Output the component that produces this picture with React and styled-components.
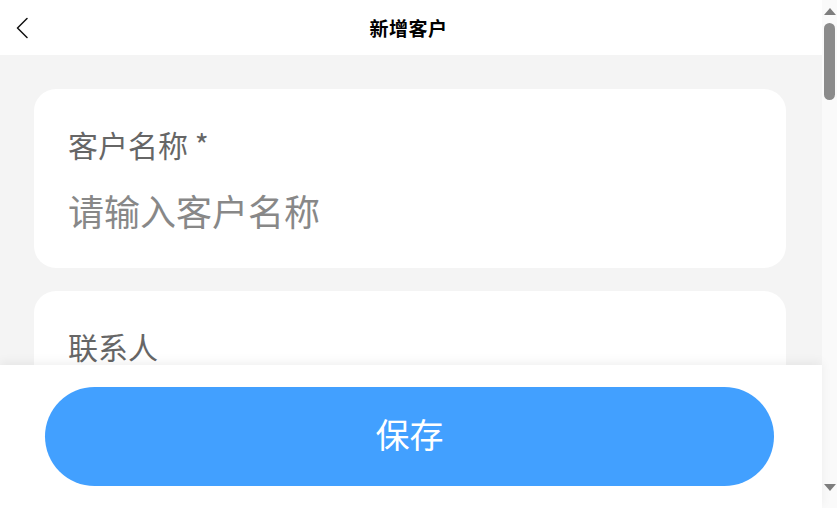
import React from "react";
import styled, { createGlobalStyle } from "styled-components";

const Global = createGlobalStyle`
  html, body { margin: 0; padding: 0; background: #f4f4f4; overflow: hidden; }
  body { font-family: "Noto Sans CJK SC", "Noto Sans", sans-serif; }
  * { box-sizing: border-box; }
`;

const Shell = styled.div`
  display: flex;
  height: 100vh;
`;

const Viewport = styled.div`
  position: relative;
  flex: 1;
  min-width: 0;
`;

const Scroller = styled.div`
  height: 100%;
  overflow-y: auto;
  scrollbar-width: none;
  background: #f4f4f4;
  &::-webkit-scrollbar { display: none; }
`;

const ScrollTrack = styled.div`
  width: 15px;
  flex: none;
  background: #fafafa;
  display: flex;
  flex-direction: column;
  align-items: center;
  padding: 8px 0 17px;
`;

const Arrow = styled.svg`
  display: block;
  flex: none;
`;

const Thumb = styled.div`
  width: 11px;
  height: 77px;
  margin-top: 8px;
  border-radius: 6px;
  background: #8b8b8b;
`;

const TrackRest = styled.div`
  flex: 1;
`;

const Content = styled.div`
  padding-bottom: 193px;
`;

const Header = styled.header`
  height: 55px;
  background: #fff;
  display: grid;
  grid-template-columns: 55px 1fr 60px;
  align-items: center;
`;

const Back = styled.button`
  border: 0;
  background: none;
  padding: 0 0 0 16px;
  height: 55px;
  display: flex;
  align-items: center;
  cursor: pointer;
`;

const Title = styled.h1`
  margin: 0;
  text-align: center;
  font-size: 19px;
  line-height: 55px;
  font-weight: 700;
  color: #000;
  letter-spacing: 0.5px;
`;

const Form = styled.main`
  padding: 34px 36px 0 34px;
  display: flex;
  flex-direction: column;
  gap: 23px;
`;

const Card = styled.section`
  background: #fff;
  border-radius: 22px;
  padding: 34px 34px 33px;
  display: flex;
  flex-direction: column;
  gap: 20px;
`;

const Label = styled.label`
  font-size: 30px;
  line-height: 42px;
  color: #666;
`;

const Input = styled.input`
  border: 0;
  outline: none;
  padding: 0;
  height: 50px;
  font-family: inherit;
  font-size: 36px;
  color: #333;
  background: transparent;
  &::placeholder { color: #888; }
`;

const Footer = styled.footer`
  position: absolute;
  left: 0;
  right: 0;
  bottom: 0;
  height: 143px;
  background: #fff;
  padding: 22px 48px 22px 45px;
  box-shadow: 0 -3px 10px rgba(0, 0, 0, 0.06);
  display: flex;
`;

const SaveButton = styled.button`
  flex: 1;
  border: 0;
  border-radius: 50px;
  background: #42a0ff;
  color: #fff;
  font-family: inherit;
  font-size: 34px;
  padding: 0 0 6px;
  cursor: pointer;
`;

const fields = [
  ["客户名称 *", "请输入客户名称"],
  ["联系人", "请输入联系人"],
  ["联系电话", "请输入联系电话"],
  ["手机号码", "请输入手机号码"],
  ["电子邮箱", "请输入电子邮箱"],
  ["公司地址", "请输入公司地址"],
  ["所属行业", "请输入所属行业"],
  ["客户来源", "请输入客户来源"],
  ["客户等级", "请输入客户等级"],
  ["开户银行", "请输入开户银行"],
  ["银行账号", "请输入银行账号"],
  ["税号", "请输入税号"],
  ["备注", "请输入备注"],
];

export default function App() {
  return (
    <>
      <Global />
      <Shell>
        <Viewport>
          <Scroller>
            <Content>
              <Header>
                <Back aria-label="返回">
                  <svg width="12" height="22" viewBox="0 0 12 22" fill="none">
                    <path d="M11 1.5 L1.5 11 L11 20.5" stroke="#111" strokeWidth="1.5" strokeLinecap="round" strokeLinejoin="round" />
                  </svg>
                </Back>
                <Title>新增客户</Title>
                <span />
              </Header>
              <Form>
                {fields.map(([label, ph]) => (
                  <Card key={label}>
                    <Label>{label}</Label>
                    <Input placeholder={ph} />
                  </Card>
                ))}
              </Form>
            </Content>
          </Scroller>
          <Footer>
            <SaveButton>保存</SaveButton>
          </Footer>
        </Viewport>
        <ScrollTrack aria-hidden="true">
          <Arrow width="12" height="7" viewBox="0 0 12 7">
            <path d="M6 0 L12 7 L0 7 Z" fill="#7e7e7e" />
          </Arrow>
          <Thumb />
          <TrackRest />
          <Arrow width="12" height="7" viewBox="0 0 12 7">
            <path d="M0 0 L12 0 L6 7 Z" fill="#7e7e7e" />
          </Arrow>
        </ScrollTrack>
      </Shell>
    </>
  );
}
